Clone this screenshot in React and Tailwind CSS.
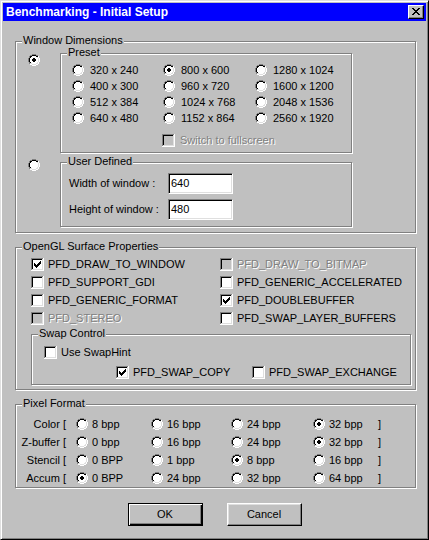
import React from 'react';

// win98 palette: G = shadow, K = dark shadow, W = window/highlight, L = light, S = face
const PAL = { G: '#808080', K: '#000000', W: '#ffffff', L: '#dfdfdf', S: '#c0c0c0' };

const RADIO = [
  '....GGGG....',
  '..GGKKKKGG..',
  '.GKKWWWWKKW.',
  '.GKWWWWWWLW.',
  'GKWWWWWWWWLW',
  'GKWWWWWWWWLW',
  'GKWWWWWWWWLW',
  'GKWWWWWWWWLW',
  '.GKWWWWWWLW.',
  '.GLLWWWWLLW.',
  '..WWLLLLWW..',
  '....WWWW....',
];
const DOT = [[5, 4], [6, 4], [4, 5], [5, 5], [6, 5], [7, 5], [4, 6], [5, 6], [6, 6], [7, 6], [5, 7], [6, 7]];

// check mark columns: [x, firstRow]
const TICK = [[3, 5], [4, 6], [5, 7], [6, 6], [7, 5], [8, 4], [9, 3]];

const CLOSE_X = [
  'KK....KK',
  '.KK..KK.',
  '..KKKK..',
  '...KK...',
  '..KKKK..',
  '.KK..KK.',
  'KK....KK',
];

function Pixels({ rows }) {
  const paths = {};
  rows.forEach((r, y) =>
    [...r].forEach((c, x) => {
      if (c === '.') return;
      (paths[c] = paths[c] || []).push(`M${x} ${y}h1v1h-1z`);
    })
  );
  return (
    <svg width={rows[0].length} height={rows.length} shapeRendering="crispEdges" className="block shrink-0">
      {Object.entries(paths).map(([c, d]) => (
        <path key={c} d={d.join('')} fill={PAL[c]} />
      ))}
    </svg>
  );
}

function Radio({ checked }) {
  let rows = RADIO;
  if (checked) {
    rows = RADIO.map(r => [...r]);
    DOT.forEach(([x, y]) => { rows[y][x] = 'K'; });
    rows = rows.map(r => r.join(''));
  }
  return <Pixels rows={rows} />;
}

function Check({ checked, disabled }) {
  const fill = disabled ? 'S' : 'W';
  const rows = [
    'GGGGGGGGGGGGW',
    'GKKKKKKKKKKLW',
    ...Array.from({ length: 9 }, () => 'GK' + fill.repeat(9) + 'LW'),
    'GLLLLLLLLLLLW',
    'WWWWWWWWWWWWW',
  ].map(r => [...r]);
  if (checked) {
    TICK.forEach(([x, y]) => {
      for (let i = 0; i < 3; i++) rows[y + i][x] = disabled ? 'G' : 'K';
    });
  }
  return <Pixels rows={rows.map(r => r.join(''))} />;
}

function Label({ disabled, children }) {
  if (disabled) return <span className="text-[#808080] [text-shadow:1px_1px_0_#fff] whitespace-nowrap">{children}</span>;
  return <span className="whitespace-nowrap">{children}</span>;
}

function CheckItem({ label, checked, disabled, className = '' }) {
  return (
    <div className={`flex h-[18px] items-center gap-[4px] pb-[1px] ${className}`}>
      <Check checked={checked} disabled={disabled} />
      <Label disabled={disabled}>{label}</Label>
    </div>
  );
}

function Group({ label, className = '', children }) {
  return (
    <div className={`relative border border-[#808080] shadow-[inset_1px_1px_0_#fff,1px_1px_0_#fff] ${className}`}>
      <span className="absolute -top-[8px] left-[6px] bg-[#c0c0c0] px-[1px] leading-[13px]">{label}</span>
      {children}
    </div>
  );
}

function Field({ value }) {
  return (
    <div className="w-[65px] h-[21px] bg-white border border-t-[#808080] border-l-[#808080] border-r-white border-b-white shadow-[inset_1px_1px_0_#000,inset_-1px_-1px_0_#dfdfdf] pl-[2px] flex items-center">
      {value}
    </div>
  );
}

const presets = [
  ['320 x 240', '800 x 600', '1280 x 1024'],
  ['400 x 300', '960 x 720', '1600 x 1200'],
  ['512 x 384', '1024 x 768', '2048 x 1536'],
  ['640 x 480', '1152 x 864', '2560 x 1920'],
];

const surface = [
  [{ label: 'PFD_DRAW_TO_WINDOW', checked: true }, { label: 'PFD_DRAW_TO_BITMAP', disabled: true }],
  [{ label: 'PFD_SUPPORT_GDI' }, { label: 'PFD_GENERIC_ACCELERATED' }],
  [{ label: 'PFD_GENERIC_FORMAT' }, { label: 'PFD_DOUBLEBUFFER', checked: true }],
  [{ label: 'PFD_STEREO', disabled: true }, { label: 'PFD_SWAP_LAYER_BUFFERS' }],
];

const pixelRows = [
  { name: 'Color [', opts: ['8 bpp', '16 bpp', '24 bpp', '32 bpp'], sel: 3 },
  { name: 'Z-buffer [', opts: ['0 bpp', '16 bpp', '24 bpp', '32 bpp'], sel: 3 },
  { name: 'Stencil [', opts: ['0 BPP', '1 bpp', '8 bpp', '16 bpp'], sel: 2 },
  { name: 'Accum [', opts: ['0 BPP', '24 bpp', '32 bpp', '64 bpp'], sel: 0 },
];
const pixelCols = ['w-[75px]', 'w-[80px]', 'w-[82px]', 'w-[65px]'];

export default function App() {
  return (
    <div className="w-[429px] h-[540px] bg-[#c0c0c0] border border-t-[#dfdfdf] border-l-[#dfdfdf] border-r-black border-b-black shadow-[inset_1px_1px_0_#fff,inset_-1px_-1px_0_#808080] p-[2px] text-[11px] leading-[13px] text-black [font-family:'Liberation_Sans',Arial,sans-serif] select-none">
      {/* title bar */}
      <div className="h-[18px] bg-[#0000ff] flex items-center justify-between pl-[3px] pr-[2px]">
        <span className="text-white font-bold text-[12px] leading-[14px]">Benchmarking - Initial Setup</span>
        <div className="w-[16px] h-[14px] bg-[#c0c0c0] border border-t-white border-l-white border-r-black border-b-black shadow-[inset_-1px_-1px_0_#808080] pl-[3px] pt-[2px]">
          <Pixels rows={CLOSE_X} />
        </div>
      </div>

      <div className="pl-[12px]">
        <Group label="Window Dimensions" className="mt-[20px] w-[401px] h-[192px]">
          <div className="pt-[11px] pl-[12px]">
            <div className="flex">
              <div className="mt-[1px]"><Radio checked /></div>
              <Group label="Preset" className="ml-[20px] w-[292px] h-[100px]">
                <div className="pt-[8px] pl-[11px]">
                  <div className="grid grid-cols-[91px_92px_auto] auto-rows-[16px]">
                    {presets.flat().map(p => (
                      <div key={p} className="flex items-center gap-[6px]">
                        <Radio checked={p === '800 x 600'} />
                        <span>{p}</span>
                      </div>
                    ))}
                  </div>
                  <div className="mt-[8px] ml-[90px] flex items-center gap-[5px]">
                    <Check disabled />
                    <Label disabled>Switch to fullscreen</Label>
                  </div>
                </div>
              </Group>
            </div>
            <div className="flex mt-[6px]">
              <Radio />
              <Group label="User Defined" className="ml-[20px] mt-[3px] w-[292px] h-[65px]">
                <div className="pt-[10px] pl-[8px] flex flex-col gap-[5px]">
                  <div className="flex items-center">
                    <span className="w-[99px]">Width of window :</span>
                    <Field value="640" />
                  </div>
                  <div className="flex items-center">
                    <span className="w-[99px]">Height of window :</span>
                    <Field value="480" />
                  </div>
                </div>
              </Group>
            </div>
          </div>
        </Group>

        <Group label="OpenGL Surface Properties" className="mt-[14px] w-[401px] h-[143px]">
          <div className="pt-[8px] pl-[15px]">
            <div className="grid grid-cols-[189px_auto]">
              {surface.flat().map(s => (
                <CheckItem key={s.label} {...s} />
              ))}
            </div>
            <Group label="Swap Control" className="mt-[6px] w-[380px] h-[51px]">
              <div className="pt-[9px] pl-[12px]">
                <CheckItem label="Use SwapHint" />
                <div className="flex mt-[2px] ml-[72px]">
                  <CheckItem label="PFD_SWAP_COPY" checked className="w-[136px]" />
                  <CheckItem label="PFD_SWAP_EXCHANGE" />
                </div>
              </div>
            </Group>
          </div>
        </Group>

        <Group label="Pixel Format" className="mt-[14px] w-[401px] h-[84px]">
          <div className="pt-[10px]">
            {pixelRows.map(row => (
              <div key={row.name} className="flex h-[18px] items-center">
                <span className="w-[50px] text-right whitespace-nowrap">{row.name}</span>
                <div className="flex ml-[10px]">
                  {row.opts.map((o, i) => (
                    <div key={i} className={`flex items-center gap-[4px] ${pixelCols[i]}`}>
                      <Radio checked={i === row.sel} />
                      <span>{o}</span>
                    </div>
                  ))}
                </div>
                <span>]</span>
              </div>
            ))}
          </div>
        </Group>
      </div>

      <div className="flex justify-center gap-[24px] mt-[15px]">
        <button className="w-[75px] h-[23px] bg-[#c0c0c0] border border-black shadow-[inset_1px_1px_0_#fff,inset_-1px_-1px_0_#000,inset_-2px_-2px_0_#808080]">
          OK
        </button>
        <button className="w-[75px] h-[23px] bg-[#c0c0c0] border border-t-white border-l-white border-r-black border-b-black shadow-[inset_-1px_-1px_0_#808080,inset_1px_1px_0_#dfdfdf]">
          Cancel
        </button>
      </div>
    </div>
  );
}
